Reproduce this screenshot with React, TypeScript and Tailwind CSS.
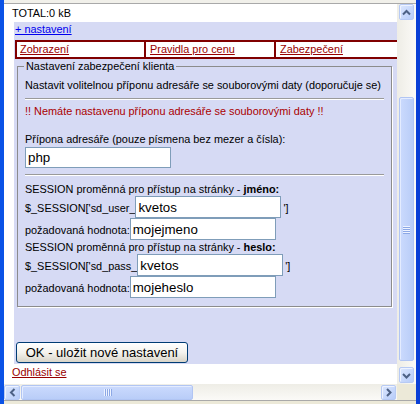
import React from "react";

const arrows = {
  up: "M1 5.5 L4.5 2 L8 5.5",
  down: "M1 2 L4.5 5.5 L8 2",
  left: "M5.5 1 L2 4.5 L5.5 8",
  right: "M2 1 L5.5 4.5 L2 8",
};

function ScrollButton({ dir, className }: { dir: keyof typeof arrows; className?: string }) {
  const vertical = dir === "up" || dir === "down";
  return (
    <div
      className={`flex items-center justify-center rounded-[2px] border border-[#b7caf4] bg-linear-to-br from-[#dce7fe] to-[#b7ccf9] shadow-[inset_1px_1px_0_#eef3ff] ${className ?? ""}`}
    >
      <svg width={vertical ? 9 : 7} height={vertical ? 7 : 9} viewBox={vertical ? "0 0 9 7" : "0 0 7 9"}>
        <path d={arrows[dir]} fill="none" stroke="#4d6185" strokeWidth="2" />
      </svg>
    </div>
  );
}

function Field({ value, w }: { value: string; w: string }) {
  return (
    <input
      readOnly
      value={value}
      className={`${w} h-[22px] border border-[#7f9db9] bg-white pl-[2px] text-[13.3px] text-black outline-none`}
    />
  );
}

export default function App() {
  return (
    <div className="flex h-[404px] w-[420px] overflow-hidden whitespace-nowrap bg-[#ece9d8] font-['Liberation_Sans',Arial,sans-serif] text-[10.9px] leading-[13px] text-black">
      <div className="w-[4px] shrink-0 bg-[#0a52e6]" />

      <div className="flex w-[412px] shrink-0 flex-col">
        <div className="h-[4px] shrink-0 border-b border-[#a9a9a9] bg-[#f1f0ea]" />

        <div className="flex h-[380px] shrink-0">
          {/* page content */}
          <div className="w-[393px] shrink-0 overflow-hidden bg-white pt-[3px]">
            <div className="h-[13px] pl-[8px]">TOTAL:0 kB</div>

            <div className="ml-[10px] mt-[2px] w-[420px] bg-[#d6daf4] pb-[1px] pl-[1px]">
              <div className="h-[14px] pt-[1px]">
                <a href="#" className="text-[#0000ee] underline">
                  + nastavení
                </a>
              </div>

              <div className="mt-[4px] flex h-[19px] w-[392px] border-y-2 border-l-2 border-[#800000] bg-white">
                <div className="w-[129px] shrink-0 border-r-2 border-[#800000] pl-[3px] leading-[15px]">
                  <a href="#" className="text-[#990000] underline">Zobrazení</a>
                </div>
                <div className="w-[130px] shrink-0 border-r-2 border-[#800000] pl-[4px] leading-[15px]">
                  <a href="#" className="text-[#990000] underline">Pravidla pro cenu</a>
                </div>
                <div className="w-[130px] shrink-0 border-r-2 border-[#800000] pl-[4px] leading-[15px]">
                  <a href="#" className="text-[#990000] underline">Zabezpečení</a>
                </div>
              </div>

              <fieldset className="ml-[2px] mt-[1px] w-[375px] border border-[#8c8c8c] px-[7px] pb-[8px] pt-[6px] shadow-[1px_1px_0_#fff]">
                <legend className="-ml-[1px] px-[2px] leading-[13px]">Nastavení zabezpečení klienta</legend>

                <div>Nastavit volitelnou příponu adresáře se souborovými daty (doporučuje se)</div>
                <div className="mt-[6px] h-[2px] border-t border-b border-t-[#9a9a9a] border-b-white" />
                <div className="mt-[5px] text-[#aa0000]">!! Nemáte nastavenu příponu adresáře se souborovými daty !!</div>

                <div className="mt-[15px]">Přípona adresáře (pouze písmena bez mezer a čísla):</div>
                <input
                  readOnly
                  value="php"
                  className="mt-[1px] block h-[21px] w-[146px] border border-[#7f9db9] bg-white pl-[2px] text-[13.3px] outline-none"
                />
                <div className="mt-[6px] h-[2px] border-t border-b border-t-[#9a9a9a] border-b-white" />

                <div className="mt-[7px]">
                  SESSION proměnná pro přístup na stránky - <b>jméno:</b>
                </div>
                <div className="flex items-baseline">
                  <span>$_SESSION['sd_user_</span>
                  <Field value="kvetos" w="w-[146px]" />
                  <span className="ml-[2px]">']</span>
                </div>
                <div className="flex items-baseline">
                  <span>požadovaná hodnota:</span>
                  <Field value="mojejmeno" w="w-[146px]" />
                </div>

                <div className="mt-[1px] h-[13px]">
                  SESSION proměnná pro přístup na stránky - <b>heslo:</b>
                </div>
                <div className="flex items-baseline">
                  <span>$_SESSION['sd_pass_</span>
                  <Field value="kvetos" w="w-[146px]" />
                  <span className="ml-[2px]">']</span>
                </div>
                <div className="flex items-baseline">
                  <span>požadovaná hodnota:</span>
                  <Field value="mojeheslo" w="w-[146px]" />
                </div>
              </fieldset>

              <button className="ml-[1px] mt-[35px] block h-[21px] w-[172px] rounded-[3px] border border-[#003c74] bg-linear-to-b from-white via-[#f4f3ee] to-[#d8d4c8] text-[13px] leading-[18px] text-black">
                OK - uložit nové nastavení
              </button>
            </div>

            <div className="mt-[2px] pl-[8px]">
              <a href="#" className="text-[#990000] underline">Odhlásit se</a>
            </div>
          </div>

          {/* vertical scrollbar */}
          <div className="flex w-[19px] shrink-0 flex-col bg-linear-to-r from-[#eeede6] to-[#fbfaf7] pl-[2px] pr-[2px]">
            <ScrollButton dir="up" className="h-[16px] w-[15px]" />
            <div className="mt-[77px] flex h-[264px] w-[15px] flex-col items-center justify-center gap-[1px] rounded-[2px] border border-[#b1c5f3] bg-linear-to-r from-[#cbdafd] to-[#b9cdf8] shadow-[inset_1px_1px_0_#e4ecff]">
              {[0, 1, 2, 3].map((i) => (
                <div key={i} className="h-[1px] w-[7px] bg-[#eef3ff] shadow-[0_1px_0_#8ca8e6]" />
              ))}
            </div>
            <ScrollButton dir="down" className="mt-[6px] h-[16px] w-[15px]" />
          </div>
        </div>

        {/* horizontal scrollbar */}
        <div className="flex h-[16px] shrink-0">
          <div className="flex w-[393px] shrink-0 items-end bg-linear-to-b from-[#eeede6] to-[#fbfaf7]">
            <ScrollButton dir="left" className="h-[15px] w-[16px]" />
            <div className="ml-[1px] flex h-[15px] w-[172px] items-center justify-center gap-[1px] rounded-[2px] border border-[#b1c5f3] bg-linear-to-b from-[#cbdafd] to-[#b9cdf8] shadow-[inset_1px_1px_0_#e4ecff]">
              {[0, 1, 2, 3].map((i) => (
                <div key={i} className="h-[7px] w-[1px] bg-[#eef3ff] shadow-[1px_0_0_#8ca8e6]" />
              ))}
            </div>
            <ScrollButton dir="right" className="ml-auto mr-[1px] h-[15px] w-[15px]" />
          </div>
          <div className="w-[19px] shrink-0 bg-[#ece9d8]" />
        </div>

        <div className="h-[4px] shrink-0 border-t border-[#a9a9a9] bg-[#ece9d8]" />
      </div>

      <div className="w-[4px] shrink-0 bg-[#0a3fd6]" />
    </div>
  );
}
